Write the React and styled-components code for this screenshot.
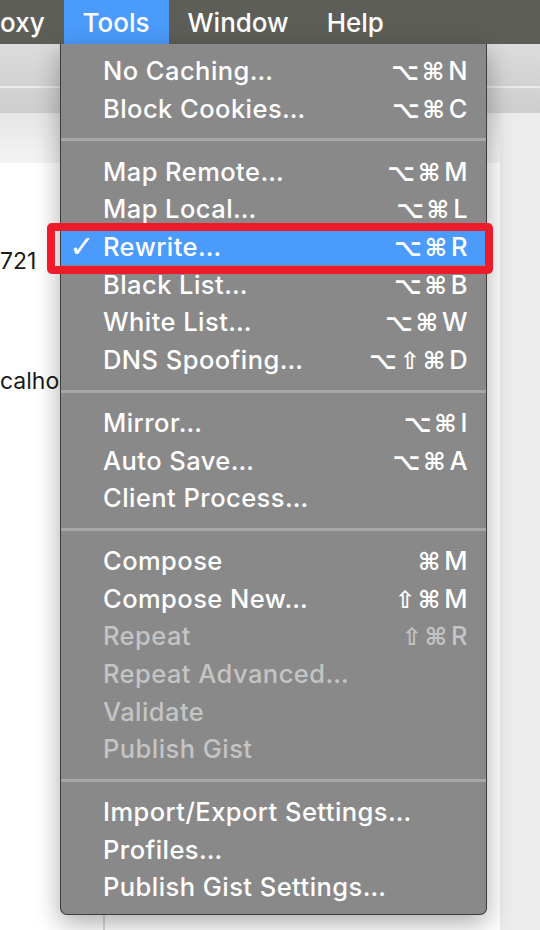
import styled, { createGlobalStyle } from "styled-components";

const GlobalStyle = createGlobalStyle`
  html, body {
    margin: 0;
    padding: 0;
  }
  body {
    font-family: Inter, "Noto Sans", "DejaVu Sans", sans-serif;
    -webkit-font-smoothing: antialiased;
  }
`;

const Screen = styled.div`
  position: relative;
  width: 540px;
  height: 930px;
  overflow: hidden;
  display: flex;
  flex-direction: column;
  background: #ececec;
`;

// system menu bar
const MenuBar = styled.div`
  flex: none;
  height: 44px;
  display: flex;
  background: #5e5e58;
`;

const MenuTitle = styled.div`
  display: flex;
  align-items: center;
  padding: 0 19px;
  font-size: 26px;
  font-weight: 500;
  color: #fff;
  background: ${props => (props.active ? "#4b9bfc" : "transparent")};
  &:first-child {
    padding-left: 0;
  }
`;

// the window under the menu
const Window = styled.div`
  flex: 1;
  display: flex;
  flex-direction: column;
`;

const Toolbar = styled.div`
  flex: none;
  height: 42px;
  background: linear-gradient(#dcdcdc, #d2d2d2);
  border-bottom: 2px solid #e9e9e9;
`;

const TabStrip = styled.div`
  flex: none;
  height: 25px;
  background: linear-gradient(#d4d4d4, #cdcdcd);
`;

const Body = styled.div`
  flex: 1;
  display: flex;
`;

const LeftPane = styled.div`
  width: 500px;
  display: flex;
  flex-direction: column;
  background: #fff;
`;

const PaneHeader = styled.div`
  flex: none;
  height: 50px;
  background: linear-gradient(#e6e6e6, #f4f4f4);
`;

const PaneColumns = styled.div`
  flex: 1;
  display: flex;
`;

const LabelColumn = styled.div`
  width: 103px;
  display: flex;
  flex-direction: column;
  gap: 90px;
  padding-top: 83px;
  border-right: 2px solid #dcdcdc;
`;

const FieldText = styled.div`
  height: 30px;
  line-height: 30px;
  font-size: 23px;
  color: #1a1a1a;
  white-space: nowrap;
`;

const RightPane = styled.div`
  flex: 1;
  background: #ececec;
`;

// dropdown
const Dropdown = styled.div`
  position: absolute;
  top: 44px;
  left: 60px;
  width: 427px;
  box-sizing: border-box;
  padding: 8px 0;
  background: #898989;
  border: 1px solid #3d3d3d;
  border-top: none;
  border-radius: 0 0 7px 7px;
  box-shadow: 0 8px 26px rgba(0, 0, 0, 0.33);
`;

const Item = styled.div`
  height: 37.7px;
  display: grid;
  grid-template-columns: 42px 1fr auto;
  align-items: center;
  padding-right: 18px;
  font-size: 25.5px;
  font-weight: 500;
  letter-spacing: 0.45px;
  color: ${props => (props.disabled ? "#c4c4c4" : "#fff")};
  background: ${props => (props.selected ? "#4b9bfc" : "transparent")};
`;

const Check = styled.span`
  text-align: center;
  font-family: "DejaVu Sans", sans-serif;
  font-weight: bold;
  font-size: 30px;
`;

const Label = styled.span`
  white-space: nowrap;
`;

const Shortcut = styled.span`
  white-space: nowrap;
  text-align: right;
  span {
    font-family: "DejaVu Sans", sans-serif;
    font-weight: bold;
    font-size: 24px;
    letter-spacing: 3px;
    margin-right: 1px;
  }
`;

const Separator = styled.div`
  height: 25px;
  display: flex;
  align-items: center;
  &::after {
    content: "";
    flex: 1;
    height: 3px;
    background: #a7a7a7;
  }
`;

// annotation drawn on top of the screenshot
const Highlight = styled.div`
  position: absolute;
  left: 47px;
  top: 223px;
  width: 446px;
  height: 51px;
  box-sizing: border-box;
  border: 8px solid #ee1c2b;
  border-radius: 5px;
`;

const groups = [
  [
    { label: "No Caching…", mods: "⌥⌘", key: "N" },
    { label: "Block Cookies…", mods: "⌥⌘", key: "C" },
  ],
  [
    { label: "Map Remote…", mods: "⌥⌘", key: "M" },
    { label: "Map Local…", mods: "⌥⌘", key: "L" },
    { label: "Rewrite…", mods: "⌥⌘", key: "R", checked: true, selected: true },
    { label: "Black List…", mods: "⌥⌘", key: "B" },
    { label: "White List…", mods: "⌥⌘", key: "W" },
    { label: "DNS Spoofing…", mods: "⌥⇧⌘", key: "D" },
  ],
  [
    { label: "Mirror…", mods: "⌥⌘", key: "I" },
    { label: "Auto Save…", mods: "⌥⌘", key: "A" },
    { label: "Client Process…" },
  ],
  [
    { label: "Compose", mods: "⌘", key: "M" },
    { label: "Compose New…", mods: "⇧⌘", key: "M" },
    { label: "Repeat", mods: "⇧⌘", key: "R", disabled: true },
    { label: "Repeat Advanced…", disabled: true },
    { label: "Validate", disabled: true },
    { label: "Publish Gist", disabled: true },
  ],
  [
    { label: "Import/Export Settings…" },
    { label: "Profiles…" },
    { label: "Publish Gist Settings…" },
  ],
];

const App = () => {
  return (
    <>
      <GlobalStyle />
      <Screen>
        <MenuBar>
          <MenuTitle>oxy</MenuTitle>
          <MenuTitle active>Tools</MenuTitle>
          <MenuTitle>Window</MenuTitle>
          <MenuTitle>Help</MenuTitle>
        </MenuBar>

        <Window>
          <Toolbar />
          <TabStrip />
          <Body>
            <LeftPane>
              <PaneHeader />
              <PaneColumns>
                <LabelColumn>
                  <FieldText>721</FieldText>
                  <FieldText>calhost</FieldText>
                </LabelColumn>
              </PaneColumns>
            </LeftPane>
            <RightPane />
          </Body>
        </Window>

        <Dropdown>
          {groups.map((group, gi) => (
            <div key={gi}>
              {gi > 0 && <Separator />}
              {group.map(item => (
                <Item
                  key={item.label}
                  disabled={item.disabled}
                  selected={item.selected}
                >
                  <Check>{item.checked ? "✓" : ""}</Check>
                  <Label>{item.label}</Label>
                  <Shortcut>
                    {item.mods && <span>{item.mods}</span>}
                    {item.key}
                  </Shortcut>
                </Item>
              ))}
            </div>
          ))}
        </Dropdown>

        <Highlight />
      </Screen>
    </>
  );
};

export default App;
